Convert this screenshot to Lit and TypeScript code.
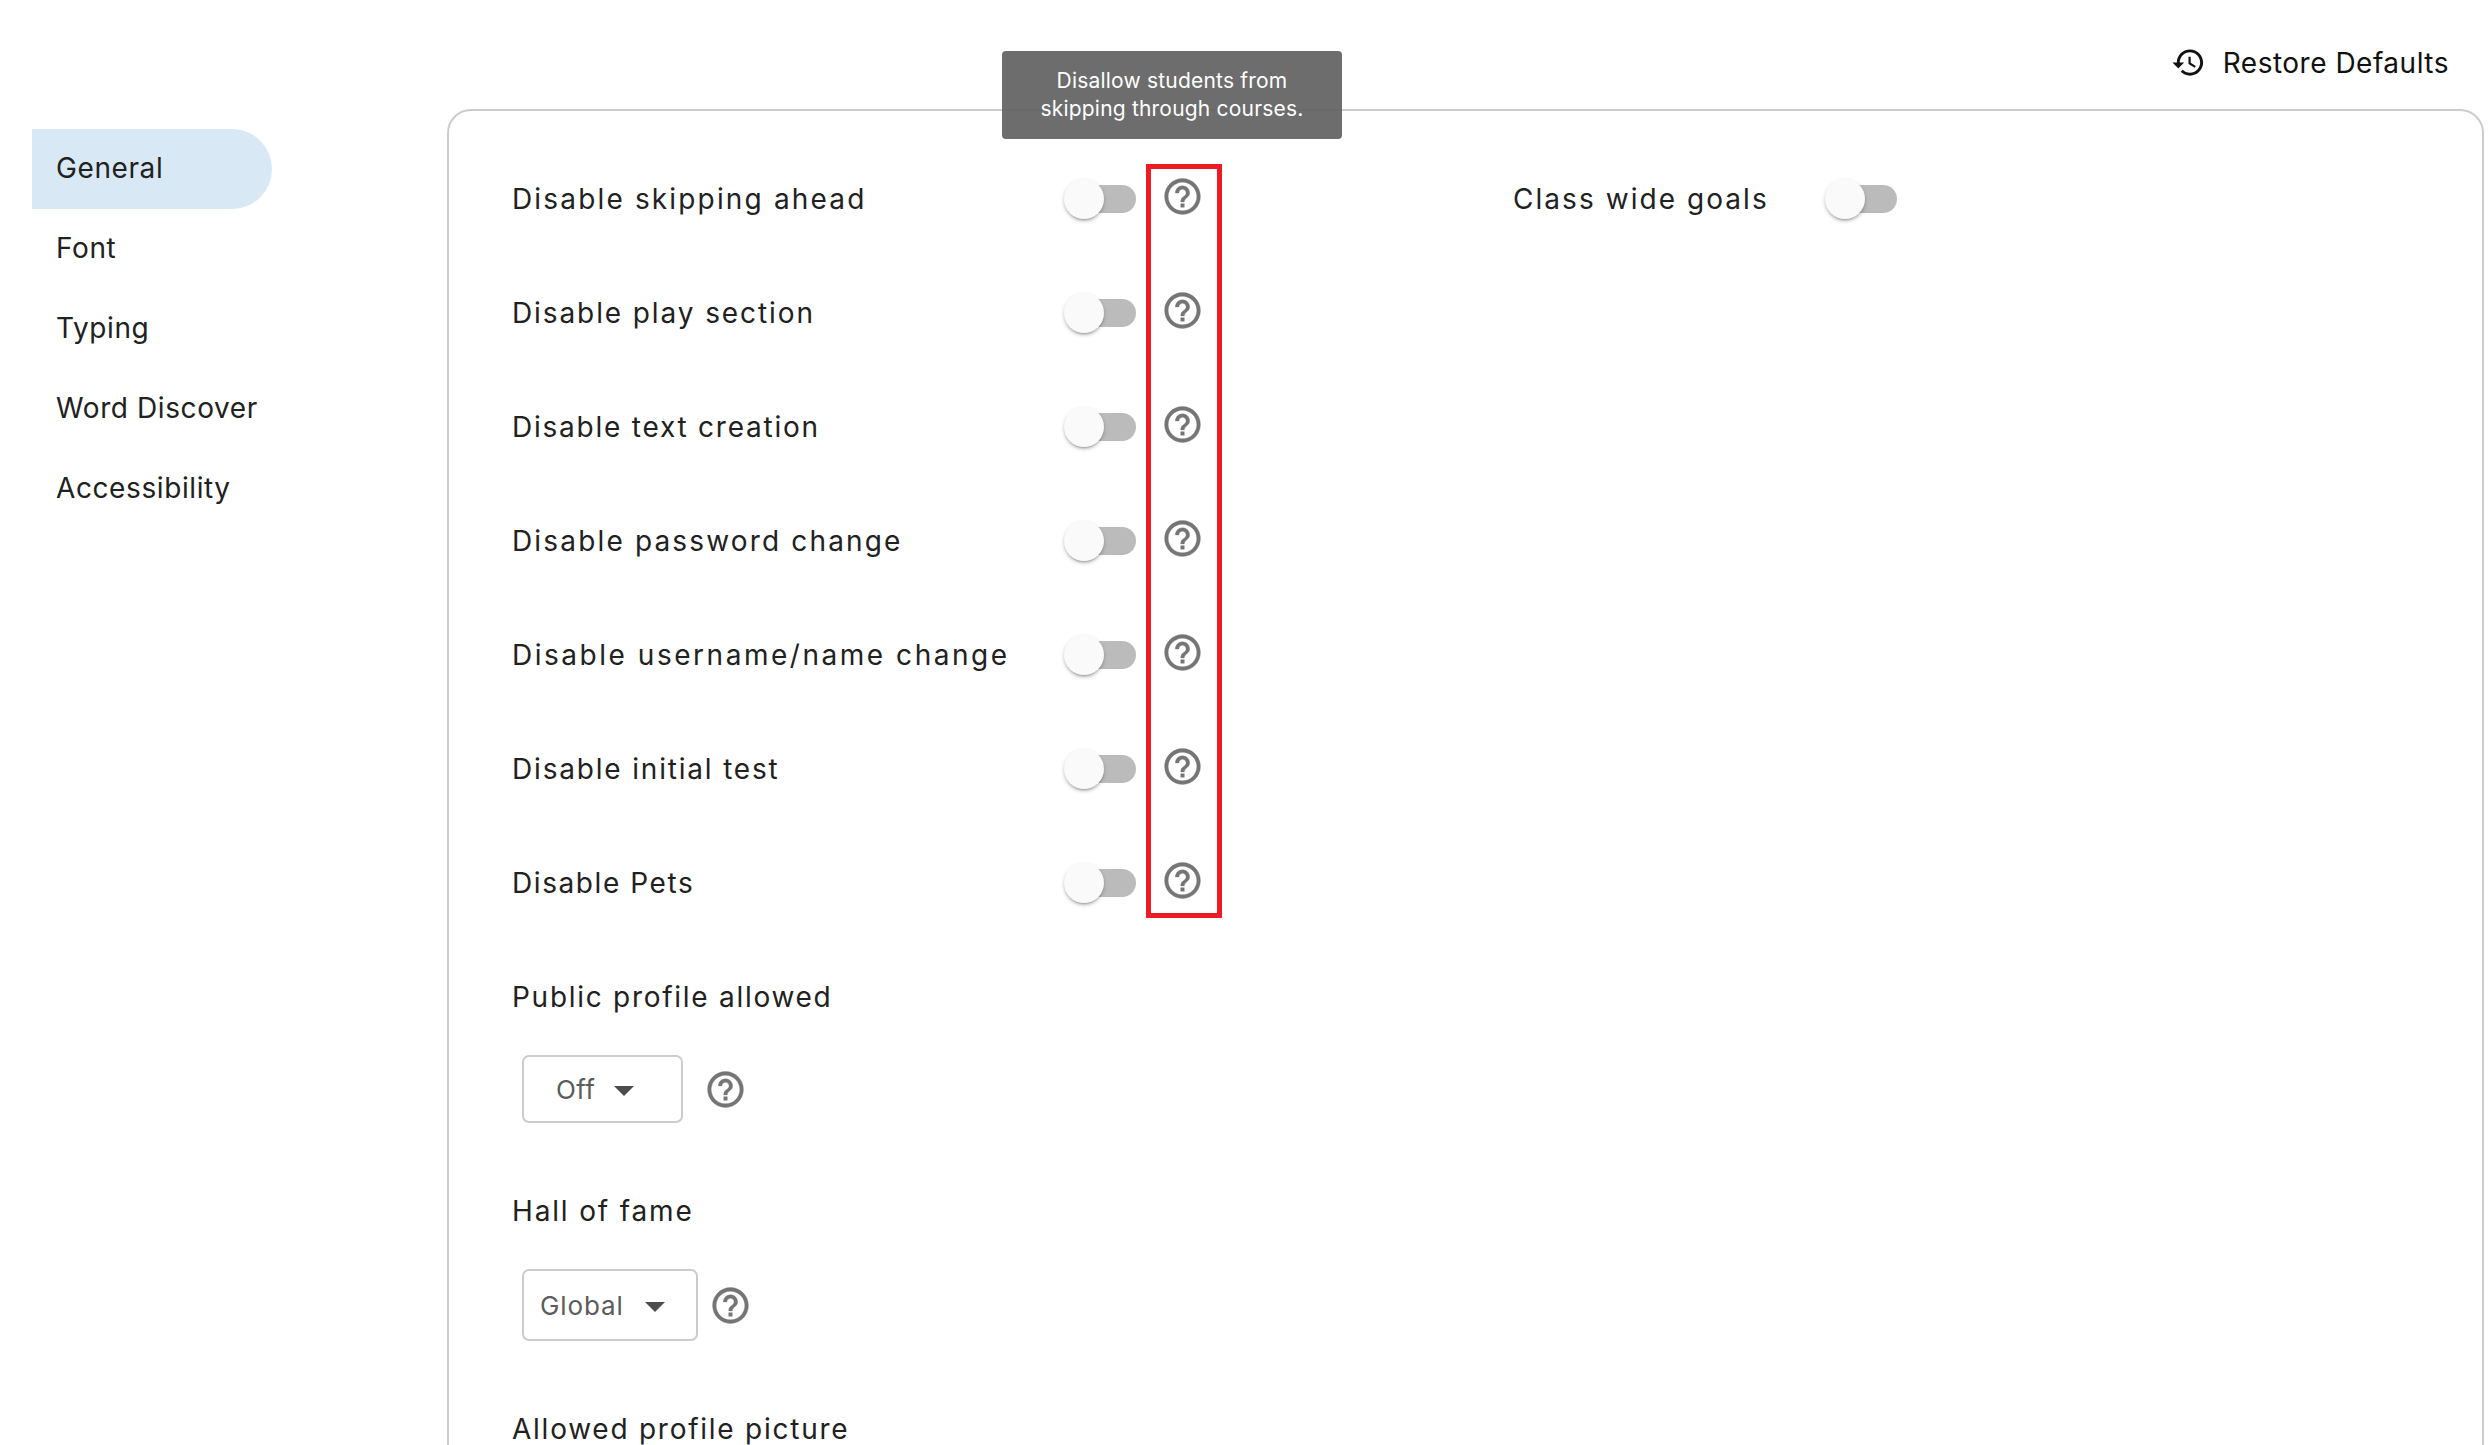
import { LitElement, html, css, svg } from "lit";
import { customElement } from "lit/decorators.js";

const helpPath = "M11 18h2v-2h-2v2zm1-16C6.48 2 2 6.48 2 12s4.48 10 10 10 10-4.48 10-10S17.52 2 12 2zm0 18c-4.41 0-8-3.59-8-8s3.59-8 8-8 8 3.59 8 8-3.59 8-8 8zm0-14c-2.21 0-4 1.79-4 4h2c0-1.1.9-2 2-2s2 .9 2 2c0 2-3 1.75-3 5h2c0-2.25 3-2.5 3-5 0-2.21-1.79-4-4-4z";
const historyPath = "M13 3c-4.97 0-9 4.03-9 9H1l3.89 3.89.07.14L9 12H6c0-3.87 3.13-7 7-7s7 3.13 7 7-3.13 7-7 7c-1.93 0-3.68-.79-4.94-2.06l-1.42 1.42C8.27 19.99 10.51 21 13 21c4.97 0 9-4.03 9-9s-4.03-9-9-9zm-1 5v5l4.28 2.54.72-1.21-3.5-2.08V8H12z";

const nav = ["General", "Font", "Typing", "Word Discover", "Accessibility"];
const rows: [string, number][] = [
  ["Disable skipping ahead", 2.16],
  ["Disable play section", 1.9],
  ["Disable text creation", 1.77],
  ["Disable password change", 2.16],
  ["Disable username/name change", 2.53],
  ["Disable initial test", 1.82],
  ["Disable Pets", 1.58],
];

@customElement("app-root")
export class AppRoot extends LitElement {
  static styles = css`
    :host {
      display: block;
      height: 1445px;
      overflow: hidden;
      background: #fff;
      font-family: "Inter", "Liberation Sans", sans-serif;
      color: #212121;
      position: relative;
    }
    .top {
      display: flex;
      justify-content: flex-end;
      align-items: center;
      height: 109px;
      padding: 16px 43px 0 0;
      box-sizing: border-box;
      gap: 17px;
      font-size: 28px;
      letter-spacing: 0.5px;
    }
    .top svg { width: 35px; height: 35px; fill: #111; }
    .top span { color: #111; }
    .body { display: flex; align-items: flex-start; }
    .side {
      width: 447px;
      flex: none;
      padding: 20px 0 0 32px;
      box-sizing: border-box;
    }
    .nav {
      width: 240px;
      height: 80px;
      padding: 0 0 2px 24px;
      box-sizing: border-box;
      display: flex;
      align-items: center;
      font-size: 28px;
      letter-spacing: 0.6px;
      border-radius: 0 40px 40px 0;
    }
    .nav.on { background: #d9e8f5; }
    .panel {
      width: 2037px;
      height: 1500px;
      flex: none;
      box-sizing: border-box;
      border: 2px solid #ccc;
      border-radius: 24px;
      padding: 31px 0 0 63px;
      display: flex;
      position: relative;
    }
    .col1 { width: 1001px; flex: none; }
    .row { display: flex; align-items: center; height: 114px; }
    .label { font-size: 28px; white-space: nowrap; }
    .row .label { width: 552px; flex: none; }
    .col2 .label { width: 312px; }
    .block { height: 114px; display: flex; align-items: center; }
    .toggle { width: 72px; height: 40px; position: relative; display: flex; justify-content: flex-end; align-items: center; flex: none; }
    .track { width: 58px; height: 28px; border-radius: 14px; background: #bbb; }
    .thumb {
      position: absolute; left: 0; top: 0; width: 40px; height: 40px; border-radius: 50%;
      background: #fafafa;
      box-shadow: 0 3px 2px -2px rgba(0,0,0,.2), 0 2px 3px 0 rgba(0,0,0,.14), 0 2px 5px 0 rgba(0,0,0,.12);
    }
    .help { width: 43px; height: 43px; fill: #757575; stroke: #757575; stroke-width: 0.2; flex: none; display: block; }
    .row .help { margin: -5px 0 0 25px; }
    .pick { display: flex; align-items: center; margin: 1px 0 0 10px; }
    .select {
      border: 2px solid #ccc;
      border-radius: 7px;
      box-sizing: border-box;
      display: flex;
      align-items: center;
      font-size: 26px;
      color: #5c5c5c;
      flex: none;
    }
    .select i { display: block; width: 0; height: 0; border: 10px solid transparent; border-top-color: #4d4d4d; border-bottom: 0; margin-top: 3px; }
    .off { width: 161px; height: 68px; padding-left: 32px; gap: 19px; letter-spacing: 0.4px; }
    .global { width: 176px; height: 72px; padding-left: 16px; gap: 21px; letter-spacing: 0.9px; }
    .p1 { margin-bottom: 31px; }
    .p2 { margin-bottom: 31px; }
    .off + .help { margin-left: 21px; }
    .global + .help { margin-left: 11px; }
    .tip {
      position: absolute;
      left: 553px;
      top: -60px;
      width: 340px;
      height: 88px;
      box-sizing: border-box;
      background: rgba(97,97,97,.92);
      border-radius: 4px;
      color: #fff;
      font-size: 21px;
      letter-spacing: 0.2px;
      line-height: 28px;
      text-align: center;
      padding-top: 16px;
    }
    .mark {
      position: absolute;
      left: 697px;
      top: 53px;
      width: 76px;
      height: 754px;
      box-sizing: border-box;
      border: 5px solid #ed1c24;
    }
  `;

  private help() {
    return html`<svg class="help" viewBox="0 0 24 24">${svg`<path d=${helpPath}></path>`}</svg>`;
  }
  private toggle() {
    return html`<div class="toggle"><div class="track"></div><div class="thumb"></div></div>`;
  }
  private label(text: string, tracking: number) {
    return html`<div class="label" style="letter-spacing:${tracking}px">${text}</div>`;
  }

  render() {
    return html`
      <div class="top">
        <svg viewBox="0 0 24 24">${svg`<path d=${historyPath}></path>`}</svg>
        <span>Restore Defaults</span>
      </div>
      <div class="body">
        <div class="side">
          ${nav.map((n, i) => html`<div class="nav ${i === 0 ? "on" : ""}">${n}</div>`)}
        </div>
        <div class="panel">
          <div class="col1">
            ${rows.map(([r, t]) => html`<div class="row">${this.label(r, t)}${this.toggle()}${this.help()}</div>`)}
            <div class="block">${this.label("Public profile allowed", 1.72)}</div>
            <div class="pick p1"><div class="select off">Off<i></i></div>${this.help()}</div>
            <div class="block">${this.label("Hall of fame", 1.84)}</div>
            <div class="pick p2"><div class="select global">Global<i></i></div>${this.help()}</div>
            <div class="block">${this.label("Allowed profile picture", 1.75)}</div>
          </div>
          <div class="col2">
            <div class="row">${this.label("Class wide goals", 2.05)}${this.toggle()}</div>
          </div>
          <div class="tip">Disallow students from<br />skipping through courses.</div>
          <div class="mark"></div>
        </div>
      </div>
    `;
  }
}
